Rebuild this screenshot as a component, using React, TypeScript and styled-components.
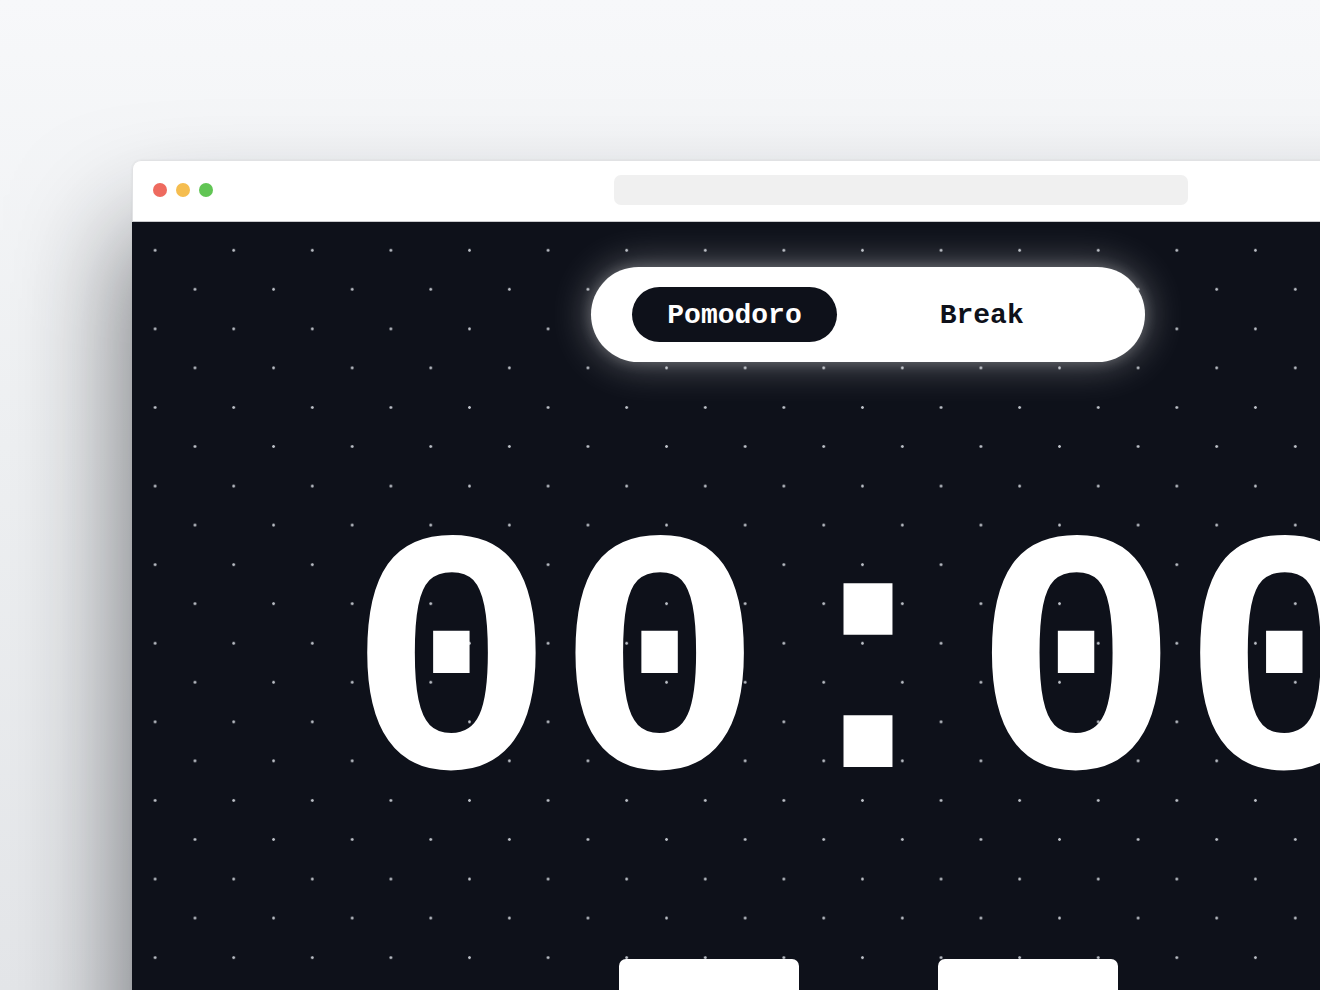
import React from "react";
import styled, { createGlobalStyle } from "styled-components";

const GlobalStyle = createGlobalStyle`
  html, body {
    margin: 0;
    padding: 0;
    height: 100%;
    overflow: hidden;
  }
  body {
    background: linear-gradient(180deg, #f7f8fa 0%, #eef0f2 45%, #e4e6e9 100%);
    font-family: "Liberation Mono", "DejaVu Sans Mono", monospace;
  }
`;

const Stage = styled.div`
  width: 1320px;
  height: 990px;
  padding: 160px 0 0 132px;
  box-sizing: border-box;
  overflow: hidden;
`;

const BrowserWindow = styled.div`
  width: 1472px;
  height: 900px;
  display: flex;
  flex-direction: column;
  border-radius: 9px 9px 0 0;
  box-shadow: -8px 70px 110px rgba(20, 22, 28, 0.55), 0 0 2px rgba(0, 0, 0, 0.08);
`;

const TitleBar = styled.div`
  height: 62px;
  box-sizing: border-box;
  display: flex;
  align-items: center;
  padding: 0 0 3px 20px;
  background: #ffffff;
  border: 1px solid #e1e2e4;
  border-bottom-color: #c9cacd;
  border-radius: 9px 9px 0 0;
  flex-shrink: 0;
`;

const Lights = styled.div`
  display: flex;
  gap: 9px;
`;

const Light = styled.span<{ $color: string }>`
  width: 14px;
  height: 14px;
  border-radius: 50%;
  background: ${(p) => p.$color};
`;

const AddressBar = styled.div`
  width: 574px;
  height: 30px;
  margin-left: 401px;
  border-radius: 7px;
  background: #f0f0f0;
`;

const Content = styled.main`
  flex: 1;
  display: flex;
  flex-direction: column;
  align-items: center;
  background-color: #0e111a;
  background-image: radial-gradient(circle at center, rgba(205, 209, 216, 0.9) 1px, transparent 1.7px),
    radial-gradient(circle at center, rgba(205, 209, 216, 0.9) 1px, transparent 1.7px);
  background-size: 78.6px 78.6px, 78.6px 78.6px;
  background-position: 23.7px 28px, -16.2px -11px;
`;

const ModeSwitch = styled.div`
  margin-top: 45px;
  display: flex;
  align-items: center;
  gap: 68px;
  padding: 20px 86px 20px 41px;
  background: #ffffff;
  border-radius: 999px;
  box-shadow: 0 0 40px rgba(255, 255, 255, 0.38), 0 0 14px rgba(255, 255, 255, 0.22);
`;

const ModeButton = styled.button<{ $active?: boolean }>`
  height: 55px;
  box-sizing: border-box;
  padding: 3px 35px 0;
  border: none;
  border-radius: 999px;
  font-family: "Liberation Mono", "DejaVu Sans Mono", monospace;
  font-weight: 700;
  font-size: 28px;
  line-height: 1;
  background: ${(p) => (p.$active ? "#0e111a" : "transparent")};
  color: ${(p) => (p.$active ? "#ffffff" : "#0e111a")};
  cursor: pointer;
`;

const Timer = styled.div`
  margin-top: 139px;
  font-family: "Liberation Mono", "DejaVu Sans Mono", monospace;
  font-weight: 700;
  font-size: 347px;
  line-height: 1;
  color: #ffffff;
  white-space: nowrap;
`;

const Controls = styled.div`
  margin-top: 111px;
  display: flex;
  gap: 139px;
`;

const ControlButton = styled.button`
  width: 180px;
  height: 72px;
  border: none;
  border-radius: 7px;
  background: #ffffff;
`;

export default function App() {
  return (
    <>
      <GlobalStyle />
      <Stage>
        <BrowserWindow>
          <TitleBar>
            <Lights>
              <Light $color="#ee6a5f" />
              <Light $color="#f5bd4f" />
              <Light $color="#61c554" />
            </Lights>
            <AddressBar />
          </TitleBar>
          <Content>
            <ModeSwitch>
              <ModeButton $active>Pomodoro</ModeButton>
              <ModeButton>Break</ModeButton>
            </ModeSwitch>
            <Timer>00:00</Timer>
            <Controls>
              <ControlButton aria-label="Start" />
              <ControlButton aria-label="Reset" />
            </Controls>
          </Content>
        </BrowserWindow>
      </Stage>
    </>
  );
}
